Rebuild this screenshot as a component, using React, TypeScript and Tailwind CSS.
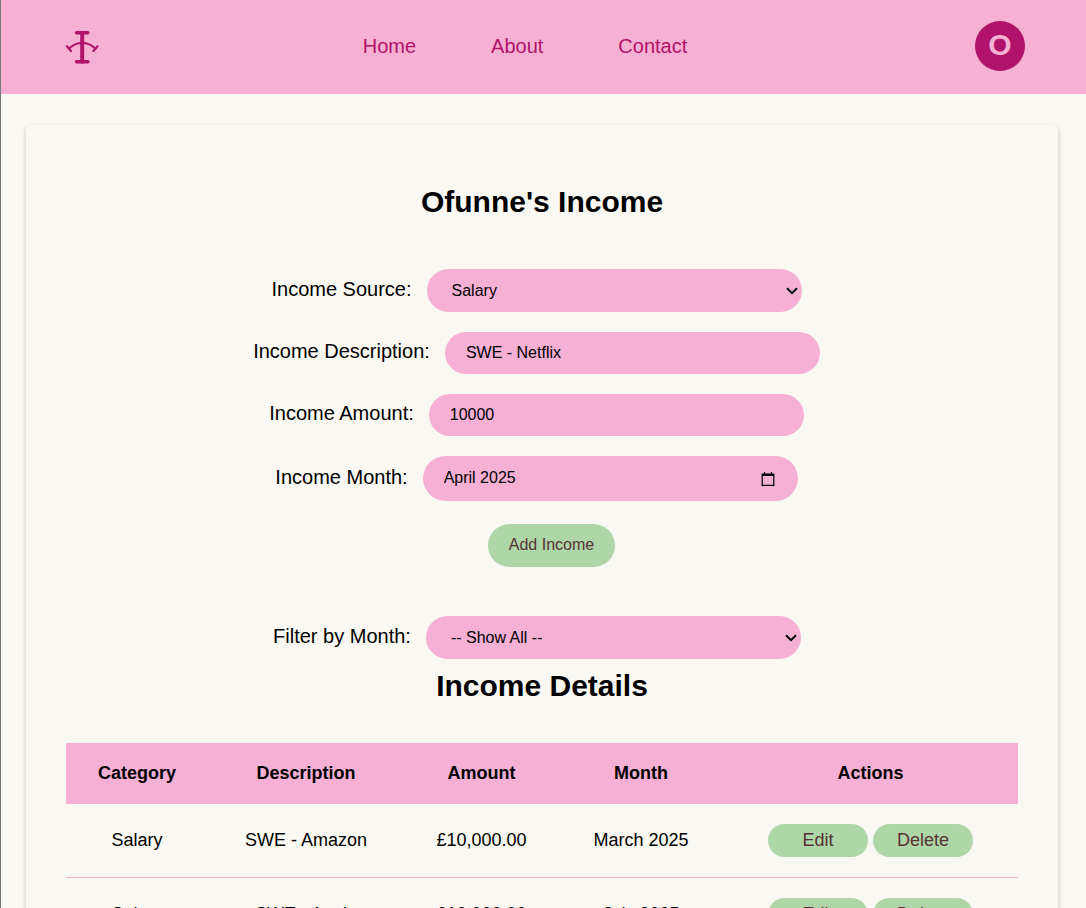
import React from "react";

const fieldClass =
  "w-[375px] rounded-[25px] bg-[#f6b0d3] px-[21px] text-base text-black outline-none";
const selectClass =
  "block h-[43px] w-[375px] appearance-none rounded-[25px] bg-[#f6b0d3] px-[25px] text-base text-black outline-none";
const rowClass = "flex items-center gap-[15px]";
const labelClass = "pb-1";
const headClass = "h-[61px] pb-0.5";
const cellClass = "h-[74px] border-b border-[#f6b0d3] pb-0.5";
const actionClass =
  "h-[33px] w-[100px] rounded-[25px] bg-[#aed6a9] pb-0.5 text-[#553333]";

const rows = [
  { category: "Salary", description: "SWE - Amazon", amount: "£10,000.00", month: "March 2025" },
  { category: "Salary", description: "SWE - Apple", amount: "£10,000.00", month: "July 2025" },
];

function Logo() {
  return (
    <svg
      viewBox="0 0 34 36"
      className="h-9 w-[34px]"
      fill="none"
      stroke="#b01369"
      strokeLinecap="round"
      role="img"
      aria-label="Logo"
    >
      <path d="M11.600 4.700H22.800M11.600 33.800H22.800" strokeWidth="3.600" />
      <path d="M17.200 4.700V33.800" strokeWidth="4" />
      <path d="M4 20.600C11.500 13.200 22.900 13.200 30.400 20.600" strokeWidth="2" />
      <path d="M1.900 18.300L6 23M32.500 18.300L28.400 23" strokeWidth="2.200" />
    </svg>
  );
}

function Select({ id, value }: { id: string; value: string }) {
  return (
    <div className="relative">
      <select id={id} className={selectClass}>
        <option>{value}</option>
      </select>
      <svg
        viewBox="0 0 12 8"
        className="pointer-events-none absolute top-[18px] right-1 h-2 w-3"
        fill="none"
        stroke="black"
        strokeWidth="2"
        aria-hidden="true"
      >
        <path d="M1 1.200L6 6.200L11 1.200" />
      </svg>
    </div>
  );
}

export default function App() {
  return (
    <div className="h-screen overflow-hidden border-l border-[#777] bg-[#faf8f2] font-['Liberation_Sans',Arial,sans-serif] text-black">
      <header className="flex h-[94px] items-center justify-between bg-[#f6b0d3] pr-[61px] pb-0.5 pl-16 text-[#b01369]">
        <a href="#home"><Logo /></a>
        <nav className="flex gap-[75px] pr-6 text-xl">
          <a href="#home">Home</a>
          <a href="#about">About</a>
          <a href="#contact">Contact</a>
        </nav>
        <button className="size-[50px] rounded-full bg-[#b01369] pb-0.5 text-3xl leading-none font-bold text-[#f6b0d3]">
          O
        </button>
      </header>
      <main className="mt-[31px] mr-7 ml-[25px] rounded-[5px] px-10 pt-[59px] shadow-[0_2px_5px_rgba(0,0,0,0.2)]">
        <h1 className="text-center text-3xl font-bold">Ofunne's Income</h1>
        <form
          className="mt-[49px] flex flex-col items-center gap-5 pr-[11px] text-xl"
          onSubmit={(e) => e.preventDefault()}
        >
          <div className={rowClass}>
            <label htmlFor="source" className={labelClass}>Income Source:</label>
            <Select id="source" value="Salary" />
          </div>
          <div className={rowClass}>
            <label htmlFor="description" className={labelClass}>Income Description:</label>
            <input id="description" defaultValue="SWE - Netflix" className={`${fieldClass} h-[42px]`} />
          </div>
          <div className={rowClass}>
            <label htmlFor="amount" className={labelClass}>Income Amount:</label>
            <input id="amount" inputMode="numeric" defaultValue="10000" className={`${fieldClass} h-[42px]`} />
          </div>
          <div className={rowClass}>
            <label htmlFor="month" className={labelClass}>Income Month:</label>
            <div className="relative">
              <input id="month" defaultValue="April 2025" className={`${fieldClass} block h-[45px] pb-0.5`} />
              <button type="button" aria-label="Choose month" className="absolute top-4 right-[23px]">
                <svg viewBox="0 0 14 14" className="block size-3.5" aria-hidden="true">
                  <path d="M3.500 0V2M10.500 0V2" stroke="black" strokeWidth="1.200" />
                  <path d="M1 1.500H13V4H1Z" fill="black" />
                  <path d="M1.200 2V13.300H12.800V2" fill="none" stroke="black" strokeWidth="1.200" />
                </svg>
              </button>
            </div>
          </div>
          <button className="mt-[3px] ml-[30px] h-[43px] w-[127px] rounded-[25px] bg-[#aed6a9] pb-0.5 text-base text-[#553333]">
            Add Income
          </button>
        </form>
        <div className="mt-[49px] flex items-center justify-center gap-[15px] pr-2.5 text-xl">
          <label htmlFor="filter" className={labelClass}>Filter by Month:</label>
          <Select id="filter" value="-- Show All --" />
        </div>
        <h2 className="mt-[9px] text-center text-3xl font-bold">Income Details</h2>
        <table className="mt-[39px] w-full border-separate border-spacing-0 text-center text-lg">
          <colgroup>
            <col className="w-[142px]" />
            <col className="w-[196px]" />
            <col className="w-[155px]" />
            <col className="w-[164px]" />
            <col />
          </colgroup>
          <thead>
            <tr className="bg-[#f6b0d3]">
              <th className={headClass}>Category</th>
              <th className={headClass}>Description</th>
              <th className={headClass}>Amount</th>
              <th className={headClass}>Month</th>
              <th className={headClass}>Actions</th>
            </tr>
          </thead>
          <tbody>
            {rows.map((row) => (
              <tr key={row.month}>
                <td className={cellClass}>{row.category}</td>
                <td className={cellClass}>{row.description}</td>
                <td className={cellClass}>{row.amount}</td>
                <td className={cellClass}>{row.month}</td>
                <td className="h-[74px] border-b border-[#f6b0d3]">
                  <div className="flex justify-center gap-[5px]">
                    <button className={actionClass}>Edit</button>
                    <button className={actionClass}>Delete</button>
                  </div>
                </td>
              </tr>
            ))}
          </tbody>
        </table>
      </main>
    </div>
  );
}
